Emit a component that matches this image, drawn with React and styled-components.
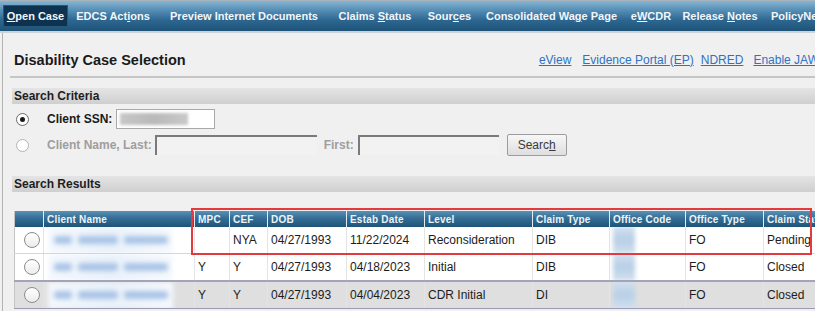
import React from 'react';
import styled, { createGlobalStyle } from 'styled-components';

const GlobalStyle = createGlobalStyle`
  body {
    margin: 0;
    background: #f0f0f0;
    font-family: "Liberation Sans", Arial, sans-serif;
    overflow: hidden;
  }
`;

const tabs = [
  { label: 'Open Case', key: 'O', w: 65, active: true },
  { label: 'EDCS Actions', key: 'i', w: 90 },
  { label: 'Preview Internet Documents', w: 172 },
  { label: 'Claims Status', key: 'S', w: 90 },
  { label: 'Sources', key: 'c', w: 59 },
  { label: 'Consolidated Wage Page', key: 'g', w: 145 },
  { label: 'eWCDR', key: 'W', w: 54 },
  { label: 'Release Notes', key: 'N', w: 84 },
  { label: 'PolicyNet', w: 68 },
];

const columns = [
  { title: '', w: 29 },
  { title: 'Client Name', w: 151 },
  { title: 'MPC', w: 35 },
  { title: 'CEF', w: 38 },
  { title: 'DOB', w: 79 },
  { title: 'Estab Date', w: 78 },
  { title: 'Level', w: 108 },
  { title: 'Claim Type', w: 77 },
  { title: 'Office Code', w: 76 },
  { title: 'Office Type', w: 78 },
  { title: 'Claim Status', w: 80 },
];

const rows = [
  { mpc: '', cef: 'NYA', dob: '04/27/1993', estab: '11/22/2024', level: 'Reconsideration', type: 'DIB', office: 'FO', status: 'Pending' },
  { mpc: 'Y', cef: 'Y', dob: '04/27/1993', estab: '04/18/2023', level: 'Initial', type: 'DIB', office: 'FO', status: 'Closed' },
  { mpc: 'Y', cef: 'Y', dob: '04/27/1993', estab: '04/04/2023', level: 'CDR Initial', type: 'DI', office: 'FO', status: 'Closed', shaded: true },
];

const NavBar = styled.div`
  display: flex;
  align-items: center;
  height: 30px;
  padding-left: 3px;
  border-top: 1px solid #a9b4bc;
  border-bottom: 2px solid #c9d3da;
  background: linear-gradient(#86b5d3 0%, #4f88b0 35%, #2c6690 65%, #1f5378 100%);
  white-space: nowrap;
`;

const NavItem = styled.div`
  flex: 0 0 ${p => p.$w}px;
  height: 22px;
  display: flex;
  align-items: center;
  justify-content: center;
  font-size: 11px;
  font-weight: bold;
  color: #f2f6f9;
  background: ${p => (p.$active ? '#0d3351' : 'transparent')};
  box-shadow: ${p => (p.$active ? 'inset 0 0 0 1px #2a5677' : 'none')};
  u { text-decoration: underline; }
`;

const Frame = styled.div`
  margin-left: 2px;
  border-left: 1px solid #b4b4b4;
  padding-left: 9px;
  min-height: 280px;
`;

const TitleRow = styled.div`
  height: 45px;
  box-sizing: border-box;
  padding-top: 10px;
  display: flex;
  align-items: center;
  justify-content: space-between;
  border-bottom: 2px solid #c6c6c6;
  margin-left: -2px;
  padding-left: 4px;
`;

const Title = styled.h1`
  margin: 0;
  font-size: 14.5px;
  font-weight: bold;
  color: #1a1a1a;
`;

const Links = styled.div`
  display: flex;
  gap: 10px;
  margin-right: -12px;
  white-space: nowrap;
`;

const Link = styled.a`
  font-size: 12px;
  color: #2f72c4;
  text-decoration: underline;
  margin-right: ${p => p.$mr || 0}px;
`;

const Band = styled.div`
  height: 16px;
  margin-top: ${p => p.$mt}px;
  padding-left: 2px;
  display: flex;
  align-items: center;
  font-size: 12px;
  font-weight: bold;
  color: #1e1e1e;
  background: linear-gradient(#e4e4e4, #cfcfcf);
`;

const FormRow = styled.div`
  display: flex;
  align-items: center;
  height: ${p => p.$h}px;
  margin-top: ${p => p.$mt}px;
  padding-left: 4px;
`;

const FormRadio = styled.span`
  width: 11px;
  height: 11px;
  border-radius: 50%;
  border: 1px solid ${p => (p.$disabled ? '#b4b4b4' : '#6a6a6a')};
  background: #fff;
  display: flex;
  align-items: center;
  justify-content: center;
  margin-right: 18px;
  &::after {
    content: '';
    width: 5px;
    height: 5px;
    border-radius: 50%;
    background: ${p => (p.$checked ? '#1a1a1a' : 'transparent')};
  }
`;

const Label = styled.span`
  font-size: 12px;
  font-weight: bold;
  color: ${p => (p.$disabled ? '#9e9e9e' : '#1a1a1a')};
  margin-right: ${p => p.$mr}px;
  margin-left: ${p => p.$ml || 0}px;
`;

const TextBox = styled.div`
  width: ${p => p.$w}px;
  height: ${p => p.$h}px;
  box-sizing: border-box;
  background: ${p => (p.$disabled ? '#f2f2f2' : '#fff')};
  border: 1px solid #a9a9a9;
  border-top-color: ${p => (p.$disabled ? '#7a7a7a' : '#a9a9a9')};
  border-left-color: ${p => (p.$disabled ? '#7a7a7a' : '#a9a9a9')};
  border-width: ${p => (p.$disabled ? '2px 0 0 2px' : '1px')};
  padding: 3px;
`;

const Masked = styled.div`
  width: 68px;
  height: 100%;
  background: linear-gradient(90deg, #c7c7c7, #b9b9b9, #c9c9c9);
  filter: blur(1.5px);
`;

const Button = styled.button`
  margin-left: 8px;
  width: 60px;
  height: 22px;
  font-family: "Liberation Sans", Arial, sans-serif;
  font-size: 12px;
  color: #3a3a3a;
  border: 1px solid #9c9c9c;
  border-radius: 2px;
  background: linear-gradient(#f7f7f7, #dedede);
  padding: 0;
  u { text-decoration: underline; }
`;

const TableWrap = styled.div`
  position: relative;
  margin-top: 17px;
  margin-left: 2px;
`;

const Table = styled.table`
  border-collapse: collapse;
  table-layout: fixed;
  width: 829px;
  border: 1px solid #c4c4c4;
  border-right: none;
`;

const Th = styled.th`
  height: 16px;
  padding: 0 0 0 3px;
  text-align: left;
  font-size: 10px;
  font-weight: bold;
  letter-spacing: 0.2px;
  color: #eef3f7;
  white-space: nowrap;
  overflow: hidden;
  background: linear-gradient(#5a90b4 0%, #336d95 45%, #1f5479 100%);
  border-left: 1px solid #e3eaf0;
  border-top: 2px solid #f0f0f0;
  &:first-child { border-left: none; }
`;

const Td = styled.td`
  height: 26px;
  padding: 0 0 0 3px;
  font-size: 12px;
  color: #1c1c1c;
  white-space: nowrap;
  overflow: hidden;
  background: ${p => (p.$shaded ? '#dfdfdf' : '#fff')};
  border-left: 1px solid #e4e4e4;
  border-bottom: 1px solid ${p => (p.$shaded ? '#9a9ab2' : '#d6d6d6')};
  border-top: ${p => (p.$shaded ? '2px solid #a3a3ba' : 'none')};
  &:first-child { border-left: none; }
`;

const RowRadio = styled.span`
  display: block;
  margin-left: 6px;
  width: 14px;
  height: 14px;
  border-radius: 50%;
  border: 1px solid #8c8c8c;
  background: linear-gradient(#ffffff, #ececec);
`;

const NameBlur = styled.div`
  width: 125px;
  height: 27px;
  margin: -1px 0 -1px 1px;
  display: flex;
  align-items: center;
  gap: 6px;
  padding-left: 6px;
  box-sizing: border-box;
  background: linear-gradient(90deg, #f4f8fd, #e9f1fa, #f6f9fd);
  filter: blur(2.5px);
  span {
    height: 8px;
    border-radius: 3px;
    background: #a9c4e6;
  }
`;

const CodeBlur = styled.div`
  width: 22px;
  height: 28px;
  margin: -1px 0 -1px 0;
  background: linear-gradient(#d2e1f0, #b8cfe6, #d2e1f0);
  filter: blur(2px);
`;

const Highlight = styled.div`
  position: absolute;
  left: 177px;
  top: -1px;
  width: 621px;
  height: 47px;
  border: 2px solid #e23a3f;
  box-sizing: border-box;
  pointer-events: none;
`;

function TabLabel({ label, mark }) {
  const i = mark ? label.indexOf(mark) : -1;
  if (i < 0) return <span>{label}</span>;
  return (
    <span>
      {label.slice(0, i)}<u>{label[i]}</u>{label.slice(i + 1)}
    </span>
  );
}

export default function App() {
  return (
    <>
      <GlobalStyle />
      <NavBar>
        {tabs.map(t => (
          <NavItem key={t.label} $w={t.w} $active={t.active}>
            <TabLabel label={t.label} mark={t.key} />
          </NavItem>
        ))}
      </NavBar>
      <Frame>
        <TitleRow>
          <Title>Disability Case Selection</Title>
          <Links>
            <Link $mr={1}>eView</Link>
            <Link $mr={-3}>Evidence Portal (EP)</Link>
            <Link>NDRED</Link>
            <Link>Enable JAWS</Link>
          </Links>
        </TitleRow>

        <Band $mt={10}>Search Criteria</Band>
        <FormRow $h={20} $mt={5}>
          <FormRadio $checked />
          <Label $mr={4}>Client SSN:</Label>
          <TextBox $w={99} $h={20}><Masked /></TextBox>
        </FormRow>
        <FormRow $h={22} $mt={5}>
          <FormRadio $disabled />
          <Label $disabled $mr={3}>Client Name, Last:</Label>
          <TextBox $disabled $w={162} $h={20} />
          <Label $disabled $ml={7} $mr={4}>First:</Label>
          <TextBox $disabled $w={141} $h={20} />
          <Button>Searc<u>h</u></Button>
        </FormRow>

        <Band $mt={20}>Search Results</Band>

        <TableWrap>
          <Table>
            <colgroup>
              {columns.map((c, i) => <col key={i} style={{ width: c.w }} />)}
            </colgroup>
            <thead>
              <tr>
                {columns.map((c, i) => <Th key={i}>{c.title}</Th>)}
              </tr>
            </thead>
            <tbody>
              {rows.map((r, i) => (
                <tr key={i}>
                  <Td $shaded={r.shaded}><RowRadio /></Td>
                  <Td $shaded={r.shaded}>
                    <NameBlur>
                      <span style={{ width: 18 }} />
                      <span style={{ width: 40 }} />
                      <span style={{ width: 44 }} />
                    </NameBlur>
                  </Td>
                  <Td $shaded={r.shaded}>{r.mpc}</Td>
                  <Td $shaded={r.shaded}>{r.cef}</Td>
                  <Td $shaded={r.shaded}>{r.dob}</Td>
                  <Td $shaded={r.shaded}>{r.estab}</Td>
                  <Td $shaded={r.shaded}>{r.level}</Td>
                  <Td $shaded={r.shaded}>{r.type}</Td>
                  <Td $shaded={r.shaded}><CodeBlur /></Td>
                  <Td $shaded={r.shaded}>{r.office}</Td>
                  <Td $shaded={r.shaded}>{r.status}</Td>
                </tr>
              ))}
            </tbody>
          </Table>
          <Highlight />
        </TableWrap>
      </Frame>
    </>
  );
}
